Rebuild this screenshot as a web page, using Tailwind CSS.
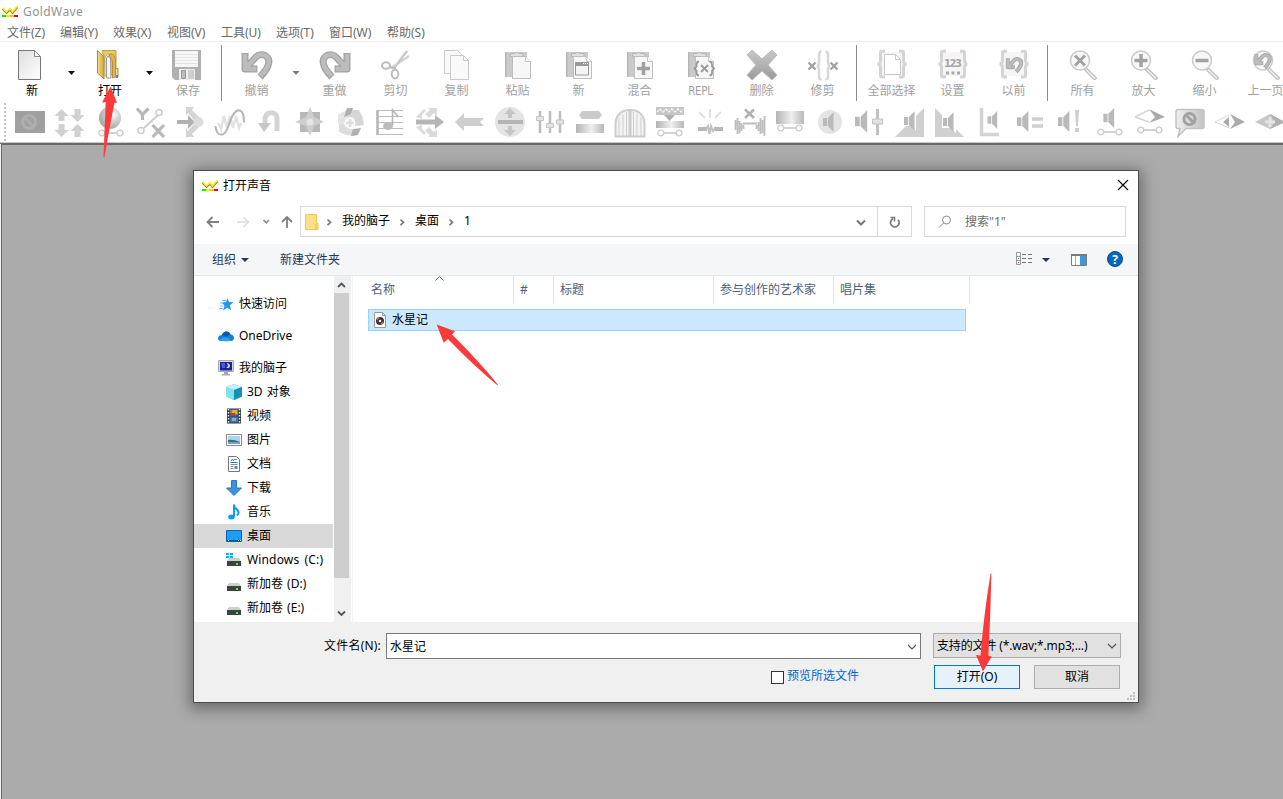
<!DOCTYPE html>
<html lang="zh-CN">
<head>
  <meta charset="UTF-8" />
  <meta name="viewport" content="width=device-width, initial-scale=1.0"/>
  <title>GoldWave</title>
  <script src="https://cdn.jsdelivr.net/npm/@tailwindcss/browser@4"></script>
</head>
<body class="relative w-[1283px] h-[799px] overflow-hidden bg-[#ababab] text-[12px] leading-[16px] font-['Noto_Sans','Noto_Sans_CJK_SC',sans-serif]">

  <!-- shared shapes -->
  <svg class="absolute w-0 h-0">
    <defs>
      <linearGradient id="pg" x1="0" y1="0" x2="1" y2="1"><stop offset="0" stop-color="#dedede"/><stop offset="1" stop-color="#fff"/></linearGradient>
      <linearGradient id="gh"><stop offset="0" stop-color="#b4b4b4"/><stop offset=".55" stop-color="#efefef"/><stop offset="1" stop-color="#b8b8b8"/></linearGradient>
      <linearGradient id="gm"><stop offset="0" stop-color="#eee"/><stop offset="1" stop-color="#c4c4c4"/></linearGradient>
      <linearGradient id="gx" x1="0" y1="0" x2="0" y2="1"><stop offset="0" stop-color="#c8c8c8"/><stop offset=".5" stop-color="#b2b2b2"/><stop offset="1" stop-color="#9a9a9a"/></linearGradient>
      <linearGradient id="fold" x1="0" y1="0" x2="1" y2="0"><stop offset="0" stop-color="#f3dc86"/><stop offset="1" stop-color="#cfa33a"/></linearGradient>
      <radialGradient id="ball" cx=".65" cy=".35" r=".65"><stop offset="0" stop-color="#fff"/><stop offset=".4" stop-color="#d5d5d5"/><stop offset="1" stop-color="#a8a8a8"/></radialGradient>
    </defs>
    <symbol id="logo" viewBox="0 0 16 13">
      <path d="M.5 3.800 4.500 8 8 4.800 10.500 8 15.500 2.300" fill="none" stroke="#8a7c10" stroke-width="1.800"/>
      <path d="M.5 2.800 4.500 6.800 8 3.500 10.500 6.800 15.500 1" fill="none" stroke="#fbe92a" stroke-width="1.800"/>
      <path d="M0 10h4v2H0z" fill="#0e0"/><path d="M4 10h4v2H4z" fill="#ee0"/><path d="M8 10h4v2H8z" fill="#fb2"/><path d="M12 10h4v2h-4z" fill="#f00"/>
    </symbol>
    <symbol id="clip" viewBox="0 0 32 32">
      <path d="M3 4h22v25H3z" fill="#cacaca"/><path d="M3 4h1.500v25H3z" fill="#b5b5b5"/>
      <path d="M8.500 5.500h3.500a3.500 3.500 0 0 1 5 0h4v3h-12.500z" fill="#e0e0e0" stroke="#b4b4b4"/>
      <path d="M10.500 8.500H23.500l5 5V30.500H10.500z" fill="#f7f7f7" stroke="#bdbdbd"/><path d="M23.500 8.500v5h5" fill="#fff" stroke="#c4c4c4"/>
    </symbol>
    <symbol id="braces" viewBox="0 0 32 32">
      <path d="M5 4h22v24H5z" fill="#f5f5f5"/>
      <path d="M9 3.200H6Q4.500 3.200 4.500 5v7q0 4-3 4 3 0 3 4v7q0 2 1.500 2h3M23 3.200h3q1.500 0 1.500 1.800v7q0 4 3 4-3 0-3 4v7q0 2-1.500 2h-3" fill="none" stroke="#d4d4d4" stroke-width="3"/>
    </symbol>
    <symbol id="lens" viewBox="0 0 32 32">
      <path d="m18 20.500 11 11" stroke="#c2c2c2" stroke-width="4"/><path d="m19 21.500 9 9" stroke="#efefef" stroke-width="1.500"/>
      <circle cx="13" cy="12.500" r="9.500" fill="#f8f8f8" stroke="#cacaca" stroke-width="1.500"/>
    </symbol>
    <symbol id="undo" viewBox="0 0 32 32">
      <g fill="none" stroke-linejoin="round">
        <path d="M4 4v16h12.500M5 19l9-10C20 2 30 7 27.500 15c-1 5-4.500 9-8.500 13" stroke="#a2a2a2" stroke-width="7"/>
        <path d="M4 5v15h11.500M5 19l9-10C20 2 30 7 27.500 15c-1 5-4 8-8 12" stroke="#bcbcbc" stroke-width="4.500"/>
      </g>
    </symbol>
    <symbol id="spk" viewBox="0 0 16 24"><path d="M0 7h5v10H0zM6 7l7-7v24l-7-7z" fill="#bababa"/></symbol>
    <symbol id="bar" viewBox="0 0 26 8"><path d="M6 4h14" stroke="#c4c4c4" stroke-width="1.500"/><circle cx="3.800" cy="4" r="2.900" fill="#fff" stroke="#ccc" stroke-width="1.400"/><circle cx="22" cy="4" r="2.900" fill="#fff" stroke="#ccc" stroke-width="1.400"/></symbol>
    <symbol id="drive" viewBox="0 0 16 16"><path d="M3 6h10l2 3H1z" fill="#ccd0d3"/><path d="M1 9h14v5H1z" fill="#3c4144"/><path d="M10 11h2v2h-2z" fill="#3f3"/></symbol>
  </svg>

  <!-- title + menu -->
  <div class="bg-white h-[144px] w-full flex flex-col">
    <div class="h-[22px] flex items-center pl-[2px] pt-[2px] text-[#929292]">
      <svg class="w-4 h-[13px] mr-[5px] -mt-[2px]"><use href="#logo"/></svg>
      <span class="text-[12px] tracking-[.4px]">GoldWave</span>
    </div>
    <div class="h-[20px] shrink-0 flex items-center pt-[2px] text-[#696969] border-b border-[#f0f0f0]">
      <span class="w-[53px] ml-[7px] whitespace-nowrap">文件(Z)</span>
      <span class="w-[53px] whitespace-nowrap">编辑(Y)</span>
      <span class="w-[54px] whitespace-nowrap">效果(X)</span>
      <span class="w-[54px] whitespace-nowrap">视图(V)</span>
      <span class="w-[55px] whitespace-nowrap">工具(U)</span>
      <span class="w-[53px] whitespace-nowrap">选项(T)</span>
      <span class="w-[58px] whitespace-nowrap">窗口(W)</span>
      <span class="whitespace-nowrap">帮助(S)</span>
    </div>

    <!-- main toolbar -->
    <div class="h-[60px] shrink-0 flex items-start pl-[2px] pt-[7px] overflow-hidden text-[#a0a0a0] *:shrink-0">
      <div class="w-[60px] flex flex-col items-center text-black">
        <svg class="w-8 h-8 -ml-[4px]" viewBox="0 0 32 32"><path d="M4.500 1.500h16l6 6v23h-22z" fill="url(#pg)" stroke="#777"/><path d="M20.500 1.500v6h6z" fill="#fff" stroke="#888"/></svg>
        <span class="mt-[2px]">新</span>
      </div>
      <svg class="w-[18px] h-8 mt-[6px]" viewBox="0 0 18 32"><path d="M6 16h7l-3.500 4z" fill="#111"/></svg>
      <div class="w-[60px] flex flex-col items-center text-black">
        <svg class="w-8 h-8" viewBox="0 0 32 32"><path d="M8 1.500h14v24h-6z" fill="#e9c768" stroke="#c59d46"/><path d="M11 8q3-4 5-3v22h-5z" fill="#fff" stroke="#aaa"/><path d="M3.500 1.500 9 7q2 5 1 11v12l-6.500-6z" fill="url(#fold)" stroke="#b78d2c"/><path d="M12.500 9q2-4 4-1l.5 21h-4.500z" fill="#f5f5f5" stroke="#999"/><path d="M16 5q5 0 5.500 6v17l-3 1V14q0-6-4-6z" fill="#dfb64e" stroke="#b98f36"/><path d="M21.500 19.500h2.500v8.500h-2.500z" fill="#eed690" stroke="#bb9540"/><path d="M22 26h2v3h-2z" fill="#38f"/></svg>
        <span class="mt-[2px]">打开</span>
      </div>
      <svg class="w-[18px] h-8 mt-[6px]" viewBox="0 0 18 32"><path d="M6 16h7l-3.500 4z" fill="#111"/></svg>
      <div class="w-[60px] flex flex-col items-center">
        <svg class="w-8 h-8 -ml-[2px]" viewBox="0 0 32 32"><path d="M1 1h29v30H4l-3-3z" fill="#b0b0b0"/><path d="M4 2h23v16H4z" fill="#f7f7f7"/><path d="M4 5.500h23M4 8.500h23M4 11.500h23M4 14.500h23" stroke="#e4e4e4"/><path d="M8 20h16v11H8z" fill="#ededed"/><path d="M10.500 21.500h4v8h-4z" fill="#bbb" stroke="#999"/><path d="M17 21h6v9h-6z" fill="#cfcfcf"/></svg>
        <span class="mt-[2px]">保存</span>
      </div>
      <div class="w-px h-[56px] bg-[#8b8b8b] ml-[3px] mr-[4px] -mt-[4px]"></div>
      <div class="w-[61px] flex flex-col items-center">
        <svg class="w-8 h-8"><use href="#undo"/></svg><span class="mt-[2px]">撤销</span>
      </div>
      <svg class="w-[17px] h-8 mt-[6px]" viewBox="0 0 17 32"><path d="M5.500 16h7L9 20z" fill="#777"/></svg>
      <div class="w-[61px] flex flex-col items-center">
        <svg class="w-8 h-8 -scale-x-100"><use href="#undo"/></svg><span class="mt-[2px]">重做</span>
      </div>
      <div class="w-[61px] flex flex-col items-center">
        <svg class="w-8 h-8" viewBox="0 0 32 32" fill="none"><path d="M27 2 13 20M29 7 11 19" stroke="#d4d4d4" stroke-width="2.500"/><path d="M27 2 14 20" stroke="#b8b8b8"/><ellipse cx="6" cy="16.500" rx="4" ry="3.300" stroke="#bcbcbc" stroke-width="2"/><ellipse cx="15" cy="25" rx="3.300" ry="4.500" stroke="#bcbcbc" stroke-width="2"/><path d="M9 18.500h6v3" stroke="#bcbcbc" stroke-width="2"/></svg>
        <span class="mt-[2px]">剪切</span>
      </div>
      <div class="w-[61px] flex flex-col items-center">
        <svg class="w-8 h-8" viewBox="0 0 32 32" stroke="#cacaca" fill="#f9f9f9"><path d="M3.500 1.500h13l5 5v18h-18z"/><path d="M9.500 6.500h13l5 5v19h-18z"/><path d="M22.500 6.500v5h5z" fill="#fff"/></svg>
        <span class="mt-[2px]">复制</span>
      </div>
      <div class="w-[61px] flex flex-col items-center">
        <svg class="w-8 h-8"><use href="#clip" y="-1"/></svg><span class="mt-[2px]">粘贴</span>
      </div>
      <div class="w-[61px] flex flex-col items-center">
        <svg class="w-8 h-8" viewBox="0 0 32 32"><use href="#clip" y="-1"/><path d="M12.500 14h13v12h-13z" fill="#f5f5f5" stroke="#999"/><path d="M12 13h14v4H12z" fill="#999"/><path d="M20 14.500h5" stroke="#fff" stroke-dasharray="1 1"/></svg>
        <span class="mt-[2px]">新</span>
      </div>
      <div class="w-[61px] flex flex-col items-center">
        <svg class="w-8 h-8" viewBox="0 0 32 32"><use href="#clip" y="-1"/><path d="M13 19.500h13M19.500 13v13" stroke="#a0a0a0" stroke-width="3.500"/></svg>
        <span class="mt-[2px]">混合</span>
      </div>
      <div class="w-[61px] flex flex-col items-center">
        <svg class="w-8 h-8" viewBox="0 0 32 32"><use href="#clip" y="-1"/><path d="m16 16 7 7m0-7-7 7M14 12.500q-2.500 0-2.500 3v2l-2 2 2 2v2q0 3 2.500 3M24.500 12.500q2.500 0 2.500 3v2l2 2-2 2v2q0 3-2.500 3" stroke="#999" stroke-width="1.800" fill="none"/></svg>
        <span class="mt-[2px] text-[11.500px] tracking-tight font-['DejaVu_Sans_Condensed','Open_Sans',sans-serif]">REPL</span>
      </div>
      <div class="w-[61px] flex flex-col items-center">
        <svg class="w-8 h-8" viewBox="0 0 32 32"><path d="m1 6 5-5 10 9L26 1l5 5-9 10 9 10-5 5-10-9-10 9-5-5 9-10z" fill="url(#gx)" stroke="#bbb" stroke-linejoin="round"/></svg>
        <span class="mt-[2px]">删除</span>
      </div>
      <div class="w-[61px] flex flex-col items-center">
        <svg class="w-8 h-8" viewBox="0 0 32 32" fill="none"><path d="m1.500 13.500 7 7m0-7-7 7m22-7 7 7m0-7-7 7" stroke="#a2a2a2" stroke-width="2.300"/><path d="M14.500 2.500q-2.500 0-2.500 4v6q0 4-2 4.500 2 .5 2 4.500v6q0 3 2.500 3M18.500 2.500q2.500 0 2.500 4v6q0 4 2 4.500-2 .5-2 4.500v6q0 3-2.500 3" stroke="#d8d8d8" stroke-width="2.500"/></svg>
        <span class="mt-[2px]">修剪</span>
      </div>
      <div class="w-px h-[56px] bg-[#8b8b8b] ml-[3px] mr-[4px] -mt-[4px]"></div>
      <div class="w-[61px] flex flex-col items-center">
        <svg class="w-8 h-8" viewBox="0 0 32 32"><use href="#braces" y="-1"/><path d="M8.500 5.500h11l5 5v15h-16z" fill="#fff" stroke="#cacaca"/><path d="M19.500 5.500v5h5z" fill="#fff" stroke="#cacaca"/></svg>
        <span class="mt-[2px] whitespace-nowrap">全部选择</span>
      </div>
      <div class="w-[61px] flex flex-col items-center">
        <svg class="w-8 h-8" viewBox="0 0 32 32"><use href="#braces" y="-1"/><text x="16" y="17.500" text-anchor="middle" font-size="10" font-weight="bold" font-family="DejaVu Sans" textLength="18" fill="#a5a5a5">123</text><path d="M9 22.500h3v3H9zm5.500 0h3v3h-3zm5.500 0h3v3h-3z" fill="#aaa"/></svg>
        <span class="mt-[2px]">设置</span>
      </div>
      <div class="w-[61px] flex flex-col items-center">
        <svg class="w-8 h-8" viewBox="0 0 32 32"><use href="#braces" y="-1"/><use href="#undo" x="7.500" y="7" width="18" height="18"/></svg>
        <span class="mt-[2px]">以前</span>
      </div>
      <div class="w-px h-[56px] bg-[#8b8b8b] ml-[3px] mr-[4px] -mt-[4px]"></div>
      <div class="w-[61px] flex flex-col items-center">
        <svg class="w-8 h-8" viewBox="0 0 32 32"><use href="#lens" y="-1"/><path d="m8 6.500 10 10m0-10-10 10" stroke="#a2a2a2" stroke-width="3"/></svg>
        <span class="mt-[2px]">所有</span>
      </div>
      <div class="w-[61px] flex flex-col items-center">
        <svg class="w-8 h-8" viewBox="0 0 32 32"><use href="#lens" y="-1"/><path d="M6.500 11.500h13M13 5v13" stroke="#a2a2a2" stroke-width="3.500"/></svg>
        <span class="mt-[2px]">放大</span>
      </div>
      <div class="w-[61px] flex flex-col items-center">
        <svg class="w-8 h-8" viewBox="0 0 32 32"><use href="#lens" y="-1"/><path d="M6.500 11.500h13" stroke="#a2a2a2" stroke-width="3.500"/></svg>
        <span class="mt-[2px]">缩小</span>
      </div>
      <div class="w-[61px] flex flex-col items-center">
        <svg class="w-8 h-8" viewBox="0 0 32 32"><use href="#lens" y="-1"/><use href="#undo" x="4" y="3" width="18" height="18"/></svg>
        <span class="mt-[2px] whitespace-nowrap">上一页</span>
      </div>
    </div>

    <!-- effects toolbar, 40px cells -->
    <div class="h-[39px] shrink-0 flex items-center overflow-hidden pl-[4px] *:shrink-0">
      <div class="w-[6px] h-[38px]"><div class="h-full border-l-2 border-dotted border-[#c4c4c4]"></div></div>
      <svg class="w-10 h-8" viewBox="0 0 40 32"><path d="M5 5h30v22H5z" fill="#a0a0a0"/><circle cx="19" cy="16" r="6.500" fill="none" stroke="#aeaeae" stroke-width="3"/><path d="m15 12 9 9" stroke="#aeaeae" stroke-width="3"/></svg>
      <svg class="w-10 h-8" viewBox="0 0 40 32" fill="#d0d0d0"><path d="m11.500 3 7 7h-4v5h-6v-5h-4zM11.500 31l7-7h-4v-6h-6v6h-4zM27.500 16l7-7h-4V3h-6v6h-4zM27.500 18l7 7h-4v6h-6v-6h-4z"/></svg>
      <svg class="w-10 h-8" viewBox="0 0 40 32"><circle cx="20" cy="12" r="11" fill="url(#ball)"/><use href="#bar" x="8" y="23" width="26" height="8"/></svg>
      <svg class="w-10 h-8" viewBox="0 0 40 32" fill="none"><path d="m7 2.500 5.500 6 6-6M12.500 8v6M22.500 19l11.500 12m0-12L22.500 31" stroke="#b8b8b8" stroke-width="3.200"/><path d="M14 22 28 9" stroke="#ccc" stroke-width="2"/><circle cx="11" cy="24.500" r="3" stroke="#ccc" stroke-width="1.500"/><circle cx="29" cy="6.500" r="3" stroke="#ccc" stroke-width="1.500"/></svg>
      <svg class="w-10 h-8" viewBox="0 0 40 32"><path d="M16 1h8l-2 3 7 7-4 4-7-8-2 3zM16 31h8l-2-3 7-7-4-4-7 8-2-3z" fill="#d4d4d4"/><path d="M7 14h11V9l7 7-7 7v-5H7z" fill="#b2b2b2"/><circle cx="28.500" cy="16" r="5" fill="#dcdcdc"/></svg>
      <svg class="w-10 h-8" viewBox="0 0 40 32" fill="none"><path d="m8 17 3 6 3-13 3 12 3-12 3 12 3-12 3 12 2-5" stroke="#e2e2e2" stroke-width="2.500"/><path d="M5.500 20c1 11 9 12 13 0S26 3 30 4.500c3 1 4 6 4 12" stroke="#b4b4b4" stroke-width="2"/></svg>
      <svg class="w-10 h-8" viewBox="0 0 40 32"><path d="M27 25V12c0-7-11-7-12 0v8" fill="none" stroke="#d4d4d4" stroke-width="5"/><path d="M8 17h13l-7 9z" fill="#c8c8c8"/></svg>
      <svg class="w-10 h-8" viewBox="0 0 40 32"><path d="M10 6h20v20H10z" fill="#b8b8b8"/><path d="m20 1 4 10 10 5-10 4-4 10-4-10-11-4 11-5z" fill="#cecece"/><circle cx="20" cy="16" r="3.500" fill="#e5e5e5"/></svg>
      <svg class="w-10 h-8" viewBox="0 0 40 32"><path d="m8 9 8-5 4 8-6 6-6-1z" fill="#e4e4e4"/><path d="M20 4h9l4 8 1 7-9 1-1-8-7-2z" fill="#d6d6d6"/><path d="m9 17 5 1 6 5 11 0-6 7-9-1-7-3z" fill="#dcdcdc"/><path d="m17 2 6 0-2 6-7 3zM23 23l8-1-3 7-7 1z" fill="#b0b0b0"/><circle cx="20" cy="17" r="5.500" fill="#fafafa"/><path d="M16 17h8m-4-4v8" stroke="#ddd" stroke-width="2.500"/></svg>
      <svg class="w-10 h-8" viewBox="0 0 40 32" fill="none"><path d="M7 4.500h26M7 10.500h26M7 16.500h26M7 22.500h26M7 28.500h26" stroke="#bdbdbd"/><path d="M7.500 4v25" stroke="#b5b5b5" stroke-width="2.500"/><path d="M22.500 20V4l6 7" stroke="#b5b5b5" stroke-width="1.600"/><ellipse cx="18" cy="20" rx="5" ry="4" fill="#bdbdbd"/></svg>
      <svg class="w-10 h-8" viewBox="0 0 40 32"><path d="M18 2h9v8l-3-3-5 5-4-4 5-4zM18 31h9v-8l-3 3-5-5-4 4 5 4zM14 3l-8 8 6 2V9l4-4zM14 29l-8-8 6-2v4l4 4z" fill="#dadada"/><path d="M6 13.500h19V9l9 7-9 7v-4.500H6z" fill="#b5b5b5"/></svg>
      <svg class="w-10 h-8" viewBox="0 0 40 32"><path d="m5 16 9-9v5h20l-4 4 4 4H14v5z" fill="#cecece"/></svg>
      <svg class="w-10 h-8" viewBox="0 0 40 32"><circle cx="20" cy="16" r="15" fill="#e4e4e4"/><path d="m20 2 6 6h-4v4h-4V8h-4zM20 30l6-6h-4v-4h-4v4h-4z" fill="#c4c4c4"/><path d="M8 14h25v4H8z" fill="#b5b5b5"/></svg>
      <svg class="w-10 h-8" viewBox="0 0 40 32"><path d="M10 5v22M20 5v22M30 5v22" stroke="#bcbcbc" stroke-width="2.500"/><path d="M6.500 10.500h7v4h-7zM16.500 17.500h7v4h-7zM26.500 14h7v4h-7z" fill="#e4e4e4" stroke="#c4c4c4"/></svg>
      <svg class="w-10 h-8" viewBox="0 0 40 32"><path d="M12 5h17l3 4-3 4H12l-3-4z" fill="#cacaca"/><path d="M6 18h28v9H6z" fill="url(#gh)"/></svg>
      <svg class="w-10 h-8" viewBox="0 0 40 32" fill="#f4f4f4" stroke="#cdcdcd"><path d="M5.500 30.500V18c0-8 5-14 14-14v26.500zM20.500 4c9 0 14 6 14 14v12.500h-14z" stroke-width="2"/><path d="M9 12v18m4-22v22m3.500-24v24m7-24v24M27 8v22m4-18v18"/></svg>
      <svg class="w-10 h-8" viewBox="0 0 40 32"><path d="M6 1h28v8H6z" fill="#c6c6c6"/><path d="m7 6 3-3 3 3 3-3 3 3 3-3 3 3 3-3 3 3 2-2" stroke="#f8f8f8" stroke-width="1.300" fill="none" stroke-dasharray="3 1"/><path d="M14 9h11l-5.500 6z" fill="#b0b0b0"/><path d="M6 15h28v7H6z" fill="url(#gh)"/><use href="#bar" x="7" y="23" width="26" height="8"/></svg>
      <svg class="w-10 h-8" viewBox="0 0 40 32" fill="none"><path d="m9 6 6 6m5-9v9m11-6-6 6" stroke="#e0e0e0" stroke-width="2"/><path d="M8 23h9M24 23h9" stroke="#b8b8b8" stroke-width="4"/><path d="m16 23 2-3 1.500 8 1.500-8 2 5 2-2" stroke="#c0c0c0" stroke-width="2"/></svg>
      <svg class="w-10 h-8" viewBox="0 0 40 32" fill="none"><path d="M15 3.500 24 12m0-8.500L15 12" stroke="#b0b0b0" stroke-width="2.500"/><path d="M5.500 14v10m2-12v16m2-13v12m2-10v8m2-6v4m13-4v4m2-7v9m2-13v16m2-14v13m2-17v20" stroke="#bdbdbd" stroke-width="1.800"/><path d="M13 17.500h14" stroke="#bdbdbd" stroke-width="2"/></svg>
      <svg class="w-10 h-8" viewBox="0 0 40 32"><path d="M6 5h28v13H6z" fill="url(#gh)"/><use href="#bar" x="7" y="18" width="26" height="8"/></svg>
      <svg class="w-10 h-8" viewBox="0 0 40 32"><circle cx="20" cy="16" r="12" fill="#e4e4e4"/><use href="#spk" x="13" y="6" width="13" height="20"/></svg>
      <svg class="w-10 h-8" viewBox="0 0 40 32"><use href="#spk" x="5" y="4" width="15" height="23"/><path d="M27.500 3v26" stroke="#c2c2c2" stroke-width="3"/><path d="M22.500 13h10v5h-10z" fill="#e2e2e2" stroke="#c2c2c2"/></svg>
      <svg class="w-10 h-8" viewBox="0 0 40 32"><path d="M34 2v29H5z" fill="#d0d0d0"/><path d="M13 10h7l6-7v22l-6-5h-7z" fill="#fff"/><use href="#spk" x="14" y="5" width="13" height="20"/></svg>
      <svg class="w-10 h-8" viewBox="0 0 40 32"><path d="M5 2v29h29z" fill="#d0d0d0"/><path d="M12 9h8l6-4v22l-6-5h-8z" fill="#fff"/><use href="#spk" x="13" y="6" width="13" height="20"/></svg>
      <svg class="w-10 h-8" viewBox="0 0 40 32"><path d="M11.500 2v26.500H29" fill="none" stroke="#d4d4d4" stroke-width="3.500"/><use href="#spk" x="17" y="5" width="13" height="18"/></svg>
      <svg class="w-10 h-8" viewBox="0 0 40 32"><use href="#spk" x="7" y="4" width="14" height="23"/><path d="M22 13h11M22 20h11" stroke="#cfcfcf" stroke-width="3.500"/></svg>
      <svg class="w-10 h-8" viewBox="0 0 40 32"><use href="#spk" x="8" y="4" width="14" height="23"/><path d="M25 4h4l-1 16h-2zM25 22h4v4h-4z" fill="#cfcfcf"/></svg>
      <svg class="w-10 h-8" viewBox="0 0 40 32"><use href="#spk" x="13" y="2" width="14" height="20"/><use href="#bar" x="7" y="22" width="26" height="8"/></svg>
      <svg class="w-10 h-8" viewBox="0 0 40 32"><path d="m5 11 14-7M5 11l14 5" stroke="#d5d5d5" stroke-width="1.500"/><path d="m19 3 16 8-16 6 6-6z" fill="#ababab"/><use href="#bar" x="7" y="20" width="26" height="8"/></svg>
      <svg class="w-10 h-8" viewBox="0 0 40 32"><path d="M8 3.500h24q2 0 2 2v15q0 2-2 2H16l-8 8 2-8H8q-2 0-2-2v-15q0-2 2-2z" fill="url(#gm)" stroke="#c2c2c2" stroke-width="1.500"/><circle cx="19.500" cy="13" r="5.500" fill="none" stroke="#a2a2a2" stroke-width="3"/><path d="m16 9 8 8" stroke="#a2a2a2" stroke-width="3"/></svg>
      <svg class="w-10 h-8" viewBox="0 0 40 32"><path d="m19 9-14 7 14 6" fill="none" stroke="#d5d5d5"/><path d="m20 8 15 8-15 7 5-7zM19 11l-6 5 6 5z" fill="#ababab"/></svg>
      <svg class="w-10 h-8" viewBox="0 0 40 32"><path d="M20 8 5 16l15 7 15-7z" fill="#c8c8c8"/><path d="m20 8 15 8-15 7 5-7z" fill="#b0b0b0"/><path d="M15 16h10m-5-5v10" stroke="#e5e5e5" stroke-width="3"/></svg>
    </div>
    <div class="h-px bg-[#c8c8c8] mt-auto"></div>
    <div class="h-px shrink-0 bg-[#696969]"></div>
  </div>
  <div class="h-[655px] border-l border-[#f0f0f0]"><div class="h-full border-l border-t border-[#696969]"></div></div>

  <!-- open dialog -->
  <div class="absolute left-[193px] top-[170px] w-[946px] h-[533px] border border-[#4c4c4c] bg-white shadow-[0_3px_14px_3px_rgba(0,0,0,0.38)] flex flex-col">
    <div class="h-[29px] shrink-0 flex items-center pl-2 pr-[9px]">
      <svg class="w-4 h-[13px] mr-[5px]"><use href="#logo"/></svg>
      <span class="text-black">打开声音</span>
      <svg class="w-3 h-3 ml-auto -mt-[2px]" viewBox="0 0 12 12"><path d="m1 1 10 10M11 1 1 11" stroke="#000" stroke-width="1.100"/></svg>
    </div>
    <div class="h-[44px] shrink-0 flex items-start pt-[6px] pl-1">
      <svg class="w-[30px] h-[31px]" viewBox="0 0 30 31" fill="none"><path d="M10 16h11M14.500 11l-5 5 5 5" stroke="#808080" stroke-width="1.800"/></svg>
      <svg class="w-[30px] h-[31px]" viewBox="0 0 30 31" fill="none"><path d="M9 16h11M15.500 11l5 5-5 5" stroke="#dcdcdc" stroke-width="1.500"/></svg>
      <svg class="w-4 h-[31px]" viewBox="0 0 16 31" fill="none"><path d="m5.500 14 2.800 2.800 2.800-2.800" stroke="#8a8a8a" stroke-width="1.700"/></svg>
      <svg class="w-[26px] h-[31px]" viewBox="0 0 26 31" fill="none"><path d="M13 22V11M8 16l5-5 5 5" stroke="#808080" stroke-width="1.800"/></svg>
      <div class="w-[612px] h-[31px] border border-[#d9d9d9] flex items-center text-black">
        <svg class="w-[14px] h-4 ml-[4px]" viewBox="0 0 14 16"><path d="M.5.500h11v9h1.500v6H.5z" fill="#ffe08a" stroke="#efc64e"/><path d="M11 10v5" stroke="#e8b93a"/></svg>
        <svg class="w-5 h-4" viewBox="0 0 20 16" fill="none"><path d="m8.500 5.500 3 2.800-3 2.800" stroke="#777" stroke-width="1.700"/></svg>
        <span class="ml-[3px] -mt-[2px] whitespace-nowrap">我的脑子</span>
        <svg class="w-5 h-4 ml-[2px]" viewBox="0 0 20 16" fill="none"><path d="m8.500 5.500 3 2.800-3 2.800" stroke="#777" stroke-width="1.700"/></svg>
        <span class="ml-[3px] -mt-[2px] whitespace-nowrap">桌面</span>
        <svg class="w-5 h-4 ml-[2px]" viewBox="0 0 20 16" fill="none"><path d="m8.500 5.500 3 2.800-3 2.800" stroke="#777" stroke-width="1.700"/></svg>
        <span class="ml-[3px] -mt-[2px]">1</span>
        <svg class="w-3 h-3 ml-auto mr-[10px]" viewBox="0 0 12 12" fill="none"><path d="m2 4.500 4 4 4-4" stroke="#777" stroke-width="2"/></svg>
        <div class="h-full w-[34px] border-l border-[#d9d9d9] flex items-center justify-center">
          <svg class="w-3 h-3" viewBox="0 0 12 12" fill="none"><path d="M9 3.800A4.300 4.300 0 1 1 4 2.800" stroke="#777" stroke-width="1.700"/><path d="M1.500 1.500h4v4" stroke="#777" stroke-width="1.600"/></svg>
        </div>
      </div>
      <div class="w-[202px] h-[31px] ml-3 border border-[#d9d9d9] flex items-center text-[#6d6d6d]">
        <svg class="w-[14px] h-[14px] ml-[13px] mr-[13px]" viewBox="0 0 14 14" fill="none" stroke="#8a8a8a"><circle cx="8.500" cy="5" r="4"/><path d="M5.500 8 1 12.500"/></svg>
        <span>搜索"1"</span>
      </div>
    </div>
    <div class="h-8 shrink-0 bg-[#f5f6f7] border-b border-[#e5e6e8] flex items-center text-[#1e395b] pl-[18px]">
      <span>组织</span>
      <svg class="w-2 h-2 ml-[5px]" viewBox="0 0 8 8"><path d="M0 2h8L4 6z" fill="#1e395b"/></svg>
      <span class="ml-[31px]">新建文件夹</span>
      <svg class="w-[17px] h-[14px] ml-auto -mt-px" viewBox="0 0 17 14" fill="none"><path d="M.5.500h4v12h-4zM.5 4.500h4M.5 8.500h4" stroke="#999"/><path d="M6 2.500h4m2 0h4M6 6.500h4m2 0h4M6 10.500h4m2 0h4" stroke="#777"/><path d="M2 6h1v1H2z" fill="#48c"/><path d="M2 10h1v1H2z" fill="#d33"/></svg>
      <svg class="w-2 h-2 ml-[9px]" viewBox="0 0 8 8"><path d="M0 2h8L4 6z" fill="#1e395b"/></svg>
      <svg class="w-4 h-3 ml-[21px]" viewBox="0 0 16 12"><path d="M.5.500h15v11H.5z" fill="#fff" stroke="#7b7b7b"/><path d="M0 0h16v2H0z" fill="#7b7b7b"/><path d="M4.500 2v9" stroke="#aaa"/><path d="M9 2h6v9H9z" fill="#3f96e0"/></svg>
      <svg class="w-4 h-4 ml-[20px] mr-[15px] -mt-px" viewBox="0 0 16 16"><circle cx="8" cy="8" r="7.500" fill="#0068c6" stroke="#12487c"/><text x="8" y="12.500" text-anchor="middle" font-size="12" font-weight="bold" font-family="Open Sans" fill="#fff">?</text></svg>
    </div>

    <div class="h-[346px] shrink-0 flex">
      <!-- navigation pane -->
      <div class="w-[139px] pt-4 text-black overflow-hidden *:flex *:items-center *:h-6 *:whitespace-nowrap">
        <div class="pl-[24px]"><svg class="w-4 h-4 mr-[5px]" viewBox="0 0 16 16"><path d="m9.500 2 1.500 4 4.500.3-3.500 3 1 4.700-3.800-2.200L5 14.500l1.500-4.500L4 6.500l4-.5z" fill="#1f9bea"/><path d="M4 4.500h4M2 7h3M2 10h3M1 12.500h4" stroke="#6fc0f4"/></svg>快速访问</div>
        <div class="pl-[24px] mt-2"><svg class="w-4 h-4 mr-[5px]" viewBox="0 0 16 16"><path d="M0 10.500C0 8 2 7 4 7c1-4 7-5 8.500-.5C15 6.500 16 8.500 16 10s-1 3-3 3H3c-2 0-3-1-3-2.500z" fill="#1480d8"/><path d="M4 7c1-4 7-5 8.500-.5L8 9z" fill="#0a5bb0"/><path d="M2 12.500c0-2 3-3 6-3.500l6 3.500c-3 1-9 .8-12 0z" fill="#2ba2ee"/></svg>OneDrive</div>
        <div class="pl-[24px] mt-2"><svg class="w-4 h-4 mr-[5px]" viewBox="0 0 16 16"><path d="M.5.500h15v11H.5z" fill="#d5d7d8" stroke="#a8abad"/><path d="M2 2h12v8.500H2z" fill="#1c22a0"/><path d="M8.500 3q3 3-.5 5 4 .5 4-2.500-.5-2.500-3.500-2.500z" fill="#cfd8ff"/><path d="M3 3h4v5H4z" fill="#4a5fd0"/><path d="M6 12h4v2h2v1.500H4V14h2z" fill="#a9acae"/></svg>我的脑子</div>
        <div class="pl-8 [word-spacing:1px]"><svg class="w-4 h-4 mr-[5px]" viewBox="0 0 16 16"><path d="M8 0 16 3v9.500L8 16 0 12.500V3z" fill="#35b9d4"/><path d="M0 3 8 6v10l-8-3.500z" fill="#7fe3ee"/><path d="M0 3 8 0l8 3-8 3z" fill="#c5f2f6"/><path d="M8 6 16 3v9.500L8 16z" fill="#1591b5"/></svg>3D 对象</div>
        <div class="pl-8"><svg class="w-4 h-4 mr-[5px]" viewBox="0 0 16 16"><path d="M1 .5h14v15H1z" fill="#333"/><path d="M4 1.500h8v6H4z" fill="#5a86c8"/><path d="M4 8.500h8v6H4z" fill="#3a6fe0"/><path d="M6 2h5v4H6z" fill="#e0b030"/><path d="M4 5h5v2.500H4z" fill="#b0482a"/><path d="M6 10h4v3H6z" fill="#8ac060"/><path d="M2.500 1v14M13.500 1v14" stroke="#fff" stroke-width="1.500" stroke-dasharray="1.500 1.500"/></svg>视频</div>
        <div class="pl-8"><svg class="w-4 h-4 mr-[5px]" viewBox="0 0 16 16"><path d="M.5 2.500h15v11H.5z" fill="#fff" stroke="#8a8a8a"/><path d="M2 4h12v8H2z" fill="#a6d4f5"/><path d="M2 8q5-1 12 2H2z" fill="#3f6d6c"/><path d="M2 10h12v2H2z" fill="#6fa3cc"/></svg>图片</div>
        <div class="pl-8"><svg class="w-4 h-4 mr-[5px]" viewBox="0 0 16 16"><path d="M2.500.500h8l3 3v12h-11z" fill="#fff" stroke="#777"/><path d="M8 3.500h3M4.500 8.500h7M4.500 10.500h3M4.500 12.500h3" stroke="#888"/><path d="M4.500 6.500h7M5 5l1.500-2L8 5" stroke="#1583c8" fill="none"/><path d="M8.500 10h3v3h-3z" fill="#49a"/></svg>文档</div>
        <div class="pl-8"><svg class="w-4 h-4 mr-[5px]" viewBox="0 0 16 16"><path d="M5.500.500h5V8h5L8 15.500.5 8h5z" fill="#3c92e2" stroke="#2378c8"/></svg>下载</div>
        <div class="pl-8"><svg class="w-4 h-4 mr-[5px]" viewBox="0 0 16 16" fill="none"><path d="M8 .5v12" stroke="#0a9cf5" stroke-width="2"/><path d="M8 1q0 3 3 4.500 3 3 0 6" stroke="#0a9cf5" stroke-width="2"/><ellipse cx="5.500" cy="13" rx="3.300" ry="2.500" fill="#0a9cf5"/></svg>音乐</div>
        <div class="pl-8 bg-[#d9d9d9]"><svg class="w-4 h-4 mr-[5px]" viewBox="0 0 16 16"><path d="M.5 2.500h15v11H.5z" fill="#1c9dfb" stroke="#0865a8"/><path d="M1 12.500h14" stroke="#045a94"/><path d="M2 12.500h1m9 0h1m1 0h1" stroke="#fff"/></svg>桌面</div>
        <div class="pl-8 tracking-[.15px] [word-spacing:2px]"><svg class="w-4 h-4 mr-[5px]" viewBox="0 0 16 16"><use href="#drive"/><path d="M0 1h3v2H0zm4 0h3v2H4zM0 4h3v2H0zm4 0h3v2H4z" fill="#00b0f0"/></svg>Windows (C:)</div>
        <div class="pl-8 [word-spacing:1px]"><svg class="w-4 h-4 mr-[5px]"><use href="#drive" y="1"/></svg>新加卷 (D:)</div>
        <div class="pl-8 [word-spacing:1px]"><svg class="w-4 h-4 mr-[5px]"><use href="#drive" y="1"/></svg>新加卷 (E:)</div>
      </div>
      <div class="w-[17px] ml-px bg-[#f0f0f0] flex flex-col items-start">
        <svg class="h-[17px] w-4 shrink-0" viewBox="0 0 16 17" fill="none"><path d="M4 11 7.500 7.500 11 11" stroke="#555" stroke-width="1.800"/></svg>
        <div class="w-full pr-[2px] h-[285px]"><div class="h-full bg-[#cdcdcd]"></div></div>
        <svg class="h-[17px] w-4 mt-auto shrink-0" viewBox="0 0 16 17" fill="none"><path d="M4 6.500 7.500 10 11 6.500" stroke="#555" stroke-width="1.800"/></svg>
      </div>
      <!-- file list -->
      <div class="flex-1 ml-px border-l border-[#f3f3f3]">
        <div class="flex h-7 text-[#4c607a] *:border-r *:border-[#e5e5e5] *:flex *:items-center *:pl-[6px] *:whitespace-nowrap">
          <div class="w-[149px] ml-[12px] relative">名称
            <svg class="absolute left-[70px] top-0 w-[9px] h-[5px]" viewBox="0 0 9 5" fill="none"><path d="m.5 4.500 4-4 4 4" stroke="#666"/></svg>
          </div>
          <div class="w-[40px]">#</div>
          <div class="w-[160px]">标题</div>
          <div class="w-[120px]">参与创作的艺术家</div>
          <div class="w-[136px]">唱片集</div>
        </div>
        <div class="w-[598px] h-[22px] ml-[15px] mt-[5px] bg-[#cce8ff] border border-[#99d1ff] flex items-center pl-[5px] text-black">
          <svg class="w-3 h-4 mr-[6px] -mt-px" viewBox="0 0 12 16"><path d="M.5.500h8l3 3v12H.5z" fill="#fff" stroke="#999"/><path d="M8.500.500v3h3" fill="none" stroke="#999"/><circle cx="6" cy="9" r="4" fill="#3a3038"/><path d="M3 7.500 5 5.500M9 10.500l-2 2" stroke="#e0743a" stroke-width="1.500"/><circle cx="6" cy="9" r="1.300" fill="#fff"/></svg>
          水星记
        </div>
      </div>
    </div>

    <!-- footer -->
    <div class="h-20 bg-[#f0f0f0] text-black relative">
      <div class="flex pt-[11px] items-start">
        <span class="w-[187px] text-right pt-[5px] mr-[5px] tracking-[.2px]">文件名(N):</span>
        <div class="w-[535px] h-[26px] bg-white border border-[#7a7a7a] flex items-center pl-[3px] pr-[3px] pt-px">水星记
          <svg class="w-[10px] h-[10px] ml-auto" viewBox="0 0 10 10" fill="none"><path d="m1 3 4 4 4-4" stroke="#555" stroke-width="1.200"/></svg>
        </div>
        <div class="w-[188px] h-[25px] ml-3 bg-[#e1e1e1] border border-[#adadad] flex items-center pl-[3px] pr-[3px] whitespace-nowrap"><span class="tracking-[-.15px]">支持的文件 (*.wav;*.mp3;...)</span>
          <svg class="w-[10px] h-[10px] ml-auto" viewBox="0 0 10 10" fill="none"><path d="m1 3 4 4 4-4" stroke="#555" stroke-width="1.200"/></svg>
        </div>
      </div>
      <div class="flex mt-[6px] pl-[577px]">
        <div class="w-[13px] h-[13px] mt-[6px] bg-white border border-[#333]"></div>
        <span class="ml-[3px] mt-[3px] text-[#0066cc] w-[147px]">预览所选文件</span>
        <div class="w-[86px] h-6 bg-[#e5f1fb] border border-[#0078d7] flex items-center justify-center">打开(O)</div>
        <div class="w-[86px] h-6 ml-[14px] bg-[#e1e1e1] border border-[#adadad] flex items-center justify-center">取消</div>
      </div>
      <svg class="absolute right-[3px] bottom-[2px] w-2 h-2" viewBox="0 0 8 8" fill="#bfbfbf"><path d="M6 0h2v2H6zM3 3h2v2H3zm3 0h2v2H6zM0 6h2v2H0zm3 0h2v2H3zm3 0h2v2H6z"/></svg>
    </div>
  </div>

  <!-- pointer arrows -->
  <svg class="absolute inset-0 w-[1283px] h-[799px] pointer-events-none" viewBox="0 0 1283 799" fill="#fc3a3a">
    <path d="m110.700 86.500 6.300 16.500-2.500-.5Q109 130 104.500 157h-1l2.200-55-3.700.5z"/>
    <path d="m436.700 324.500 18.300 6.700-3 3.300Q477 359 498 384.700l-.6.600Q472 364 448 338.900l-4.300 3.800z"/>
    <path d="m983 671.500 8.800-15-3.400-.7Q990.500 615 991.400 573.500h-.8Q984 613 980.500 655.500l-4.500-.5z"/>
  </svg>
</body>
</html>
